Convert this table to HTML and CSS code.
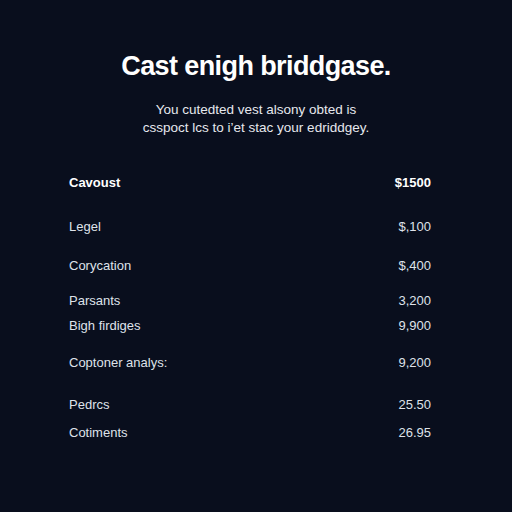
FILE: index.html
```html
<!DOCTYPE html>
<html>
<head>
<meta charset="utf-8">
<link rel="stylesheet" href="styles.css">
</head>
<body>
<main class="page">
  <h1 class="title">Cast enigh briddgase.</h1>
  <p class="subtitle">You cutedted vest alsony obted is<br>csspoct lcs to i’et stac your edriddgey.</p>
  <div class="table">
    <div class="row head"><span>Cavoust</span><span>$1500</span></div>
    <div class="row g26"><span>Legel</span><span>$,100</span></div>
    <div class="row g21"><span>Corycation</span><span>$,400</span></div>
    <div class="row g17"><span>Parsants</span><span>3,200</span></div>
    <div class="row g7"><span>Bigh firdiges</span><span>9,900</span></div>
    <div class="row g19"><span>Coptoner analys:</span><span>9,200</span></div>
    <div class="row g24"><span>Pedrcs</span><span>25.50</span></div>
    <div class="row g10"><span>Cotiments</span><span>26.95</span></div>
  </div>
</main>
</body>
</html>
```
FILE: styles.css
```css
html, body {
  margin: 0;
  padding: 0;
  background: #090e1d;
}
body {
  width: 512px;
  height: 512px;
  font-family: "Liberation Sans", Arial, sans-serif;
  color: #e4e7ee;
}
.page {
  display: flex;
  flex-direction: column;
  padding-top: 49px;
}
.title {
  margin: 0;
  text-align: center;
  font-size: 27px;
  line-height: 34px;
  font-weight: 700;
  color: #ffffff;
  letter-spacing: -0.6px;
}
.subtitle {
  margin: 18px 0 0;
  text-align: center;
  font-size: 13.5px;
  line-height: 18px;
  color: #e6e8ee;
}
.table {
  margin-top: 37px;
  padding: 0 81px 0 69px;
  display: flex;
  flex-direction: column;
}
.row {
  display: flex;
  justify-content: space-between;
  font-size: 13px;
  line-height: 18px;
  color: #dfe2ea;
}
.row.head {
  font-weight: 700;
  color: #ffffff;
}
.g26 { margin-top: 26px; }
.g21 { margin-top: 21px; }
.g17 { margin-top: 17px; }
.g7 { margin-top: 7px; }
.g19 { margin-top: 19px; }
.g24 { margin-top: 24px; }
.g10 { margin-top: 10px; }
```
